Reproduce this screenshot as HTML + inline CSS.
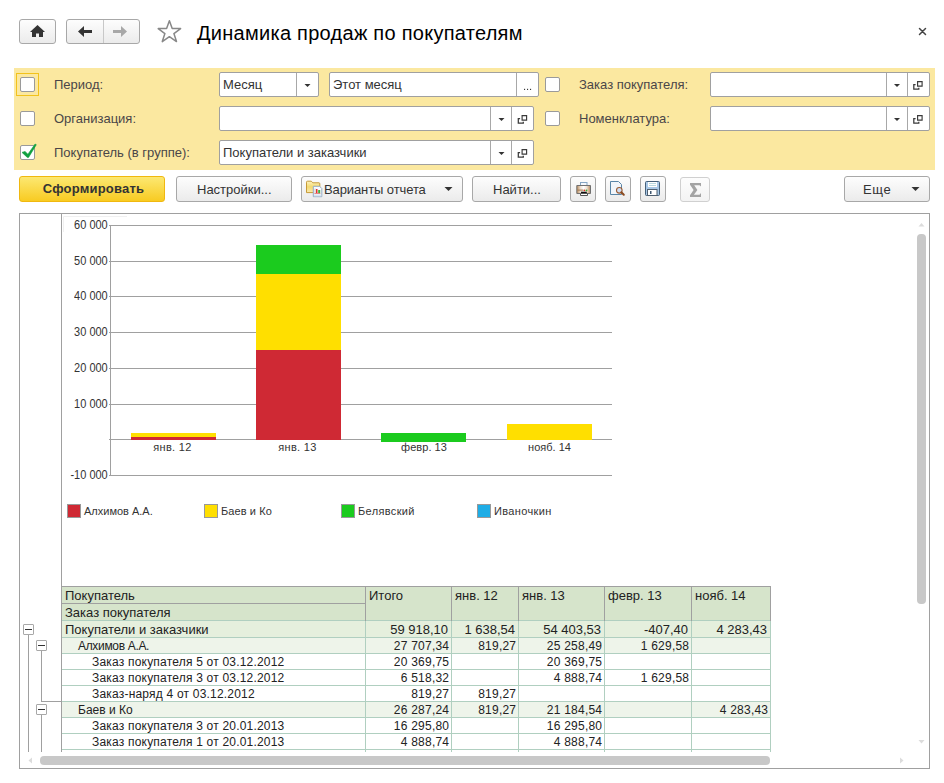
<!DOCTYPE html>
<html><head><meta charset="utf-8">
<style>
*{box-sizing:border-box;margin:0;padding:0}
html,body{width:944px;height:783px;overflow:hidden;background:#fff;font-family:"Liberation Sans",sans-serif;color:#333}
.a{position:absolute;white-space:nowrap}
.t13{font-size:13px;line-height:15px}
.btn{position:absolute;border:1px solid #a8a8a8;border-radius:3px;background:linear-gradient(#fdfdfd,#ebebeb);}
.lbl{color:#4a4648}
.fld{position:absolute;background:#fff;border:1px solid #a0a0a0;border-radius:2px;height:25px}
.fld .dv{position:absolute;top:0;bottom:0;width:1px;background:#a8a8a8}
.cb{position:absolute;width:15px;height:15px;border:1px solid #9a9a9a;border-radius:2px;background:#fff}
svg{position:absolute;overflow:visible}
</style></head><body>

<!-- title bar -->
<div class="btn" style="left:19px;top:19px;width:37px;height:25px"></div>
<div class="btn" style="left:66px;top:19px;width:74px;height:25px"></div>
<div class="a" style="left:103px;top:20px;width:1px;height:23px;background:#c8c8c8"></div>
<svg style="left:0;top:0" width="944" height="60">
  <path d="M30 32 L37.5 25 L45 32 Z" fill="#333"/>
  <path d="M32 31 H43 V37 H39 V33.5 H36 V37 H32 Z" fill="#333"/>
  <path d="M78 31.5 L84 26 V30 H92 V33 H84 V37 Z" fill="#333"/>
  <path d="M127 31.5 L121 26 V30 H113 V33 H121 V37 Z" fill="#a8a8a8"/>
  <path d="M169.4 20.8 L172.2 28.6 L180.6 28.6 L173.9 33.6 L176.5 41.6 L169.4 36.7 L162.3 41.6 L164.9 33.6 L158.2 28.6 L166.6 28.6 Z" fill="none" stroke="#888" stroke-width="1.5" stroke-linejoin="round"/>
  <path d="M919.5 28.5 L925.5 34.5 M925.5 28.5 L919.5 34.5" stroke="#444" stroke-width="1.5" stroke-linecap="round"/>
</svg>
<div class="a" style="left:197px;top:22px;font-size:20px;line-height:22px;color:#000;letter-spacing:0.27px">Динамика продаж по покупателям</div>

<!-- yellow panel -->
<div class="a" style="left:14px;top:68px;width:921px;height:102px;background:#fbe8a0"></div>
<div class="a" style="left:16px;top:73px;width:23px;height:23px;border:1px solid #f2c21b"></div>
<div class="cb" style="left:20px;top:77px"></div>
<div class="cb" style="left:20px;top:111px"></div>
<div class="cb" style="left:20px;top:145px"></div>
<svg style="left:0;top:0" width="944" height="200">
  <path d="M22 152.4 L25 151.4 L27.9 154.2 L35.1 144 L36.3 144.7 L28.6 157.4 L27.3 157.4 Z" fill="#10a040" stroke="#10a040" stroke-width="0.6" stroke-linejoin="round"/>
</svg>
<div class="cb" style="left:545px;top:77px"></div>
<div class="cb" style="left:545px;top:111px"></div>

<div class="a t13 lbl" style="left:54px;top:77px">Период:</div>
<div class="a t13 lbl" style="left:54px;top:111px">Организация:</div>
<div class="a t13 lbl" style="left:54px;top:145px">Покупатель (в группе):</div>
<div class="a t13 lbl" style="left:579px;top:77px">Заказ покупателя:</div>
<div class="a t13 lbl" style="left:579px;top:111px">Номенклатура:</div>

<div class="fld" style="left:219px;top:72px;width:100px"><div class="dv" style="left:76px"></div></div>
<div class="a t13" style="left:223px;top:77px">Месяц</div>
<div class="fld" style="left:329px;top:72px;width:210px"><div class="dv" style="left:186px"></div></div>
<div class="a t13" style="left:333px;top:77px">Этот месяц</div>
<svg style="left:0;top:0" width="944" height="100"><rect x="524" y="88.8" width="1.1" height="1.2" fill="#3a3a3a"/><rect x="527" y="88.8" width="1.1" height="1.2" fill="#3a3a3a"/><rect x="530" y="88.8" width="1.1" height="1.2" fill="#3a3a3a"/></svg>

<div class="fld" style="left:219px;top:106px;width:315px"><div class="dv" style="left:270px"></div><div class="dv" style="left:291px"></div></div>
<div class="fld" style="left:219px;top:140px;width:315px"><div class="dv" style="left:270px"></div><div class="dv" style="left:291px"></div></div>
<div class="a t13" style="left:223px;top:145px">Покупатели и заказчики</div>

<div class="fld" style="left:710px;top:72px;width:220px"><div class="dv" style="left:175px"></div><div class="dv" style="left:196px"></div></div>
<div class="fld" style="left:710px;top:106px;width:220px"><div class="dv" style="left:175px"></div><div class="dv" style="left:196px"></div></div>

<svg style="left:0;top:0" width="944" height="200">
  
  <g transform="translate(307.5 85.5)"><path d="M-3 -1.6 H3 L0 1.6 Z" fill="#333"/></g>
  <g transform="translate(501.5 119.5)"><path d="M-3 -1.6 H3 L0 1.6 Z" fill="#333"/></g><g transform="translate(517.5 119)"><path d="M4.6 -3.4 H9.1 V1.1 H4.6 Z" fill="none" stroke="#3a3a3a" stroke-width="1.15"/><path d="M2.6 -0.3 H0.8 V4.2 H5.8 V2.7" fill="none" stroke="#3a3a3a" stroke-width="1.25"/></g>
  <g transform="translate(501.5 153.5)"><path d="M-3 -1.6 H3 L0 1.6 Z" fill="#333"/></g><g transform="translate(517.5 153)"><path d="M4.6 -3.4 H9.1 V1.1 H4.6 Z" fill="none" stroke="#3a3a3a" stroke-width="1.15"/><path d="M2.6 -0.3 H0.8 V4.2 H5.8 V2.7" fill="none" stroke="#3a3a3a" stroke-width="1.25"/></g>
  <g transform="translate(897 85.5)"><path d="M-3 -1.6 H3 L0 1.6 Z" fill="#333"/></g><g transform="translate(913 85)"><path d="M4.6 -3.4 H9.1 V1.1 H4.6 Z" fill="none" stroke="#3a3a3a" stroke-width="1.15"/><path d="M2.6 -0.3 H0.8 V4.2 H5.8 V2.7" fill="none" stroke="#3a3a3a" stroke-width="1.25"/></g>
  <g transform="translate(897 119.5)"><path d="M-3 -1.6 H3 L0 1.6 Z" fill="#333"/></g><g transform="translate(913 119)"><path d="M4.6 -3.4 H9.1 V1.1 H4.6 Z" fill="none" stroke="#3a3a3a" stroke-width="1.15"/><path d="M2.6 -0.3 H0.8 V4.2 H5.8 V2.7" fill="none" stroke="#3a3a3a" stroke-width="1.25"/></g>
</svg>

<!-- buttons -->
<div class="a" style="left:19px;top:176px;width:146px;height:26px;border:1px solid #f0b810;border-radius:3px;background:linear-gradient(#fce872,#f8cb22)"></div>
<div class="a" style="left:20.5px;top:181px;width:146px;text-align:center;font-size:13px;line-height:15px;font-weight:bold;color:#333;letter-spacing:0.2px">Сформировать</div>
<div class="btn" style="left:176px;top:176px;width:116px;height:26px"></div>
<div class="a t13" style="left:197px;top:182px">Настройки...</div>
<div class="btn" style="left:301px;top:176px;width:162px;height:26px"></div>
<div class="a t13" style="left:324px;top:182px;letter-spacing:-0.1px">Варианты отчета</div>
<div class="btn" style="left:472px;top:176px;width:89px;height:26px"></div>
<div class="a t13" style="left:493px;top:182px">Найти...</div>
<div class="btn" style="left:570px;top:176px;width:26px;height:26px"></div>
<div class="btn" style="left:605px;top:176px;width:26px;height:26px"></div>
<div class="btn" style="left:640px;top:176px;width:26px;height:26px"></div>
<div class="btn" style="left:680px;top:177px;width:30px;height:25px;border-color:#d0d0d0;background:linear-gradient(#fdfdfd,#f3f3f3)"></div>
<div class="btn" style="left:844px;top:176px;width:86px;height:26px"></div>
<div class="a t13" style="left:863px;top:182px;letter-spacing:0.6px">Еще</div>
<svg style="left:0;top:0" width="944" height="220">
  <path d="M444.5 187 H452.5 L448.5 191 Z" fill="#333"/>
  <path d="M911.5 187 H919.5 L915.5 191 Z" fill="#333"/>
  <!-- sigma -->
  <path d="M690 183 H701 V186.6 L699.5 185.2 H694.2 L697.4 190 L693.9 194.8 H699.5 L701 193 V197 H690 V195.2 L693.6 190 L690 184.8 Z" fill="#a4a4a4"/>
  <!-- folder + doc -->
  <defs>
    <linearGradient id="fg" x1="0" y1="0" x2="0" y2="1"><stop offset="0" stop-color="#fdf3c0"/><stop offset="0.5" stop-color="#f3d970"/><stop offset="1" stop-color="#fbeab0"/></linearGradient>
  </defs>
  <path d="M306.5 182.2 Q306.5 181.2 307.5 181.2 H311.3 L312.8 182.8 H319 Q319.8 182.8 319.8 183.8 V192.6 H306.5 Z" fill="url(#fg)" stroke="#c69a38" stroke-width="1"/>
  <path d="M313.3 186.3 H319.6 L321.8 188.5 V196.7 H313.3 Z" fill="#f8fbff" stroke="#94abc2" stroke-width="1"/>
  <rect x="314" y="194.5" width="7.3" height="1.8" fill="#d6e4f2"/>
  <rect x="314.6" y="188.6" width="1" height="4.6" fill="#c8c8c8"/>
  <rect x="316" y="189" width="1.5" height="4.2" fill="#e8302a"/>
  <rect x="318.2" y="190" width="2" height="3.2" fill="#3bb040"/>
  <rect x="314.4" y="193.2" width="6" height="0.8" fill="#e07070"/>
  <!-- printer -->
  <linearGradient id="pg" x1="0" y1="0" x2="1" y2="0"><stop offset="0" stop-color="#b88a5c"/><stop offset="0.28" stop-color="#efe2d4"/><stop offset="0.5" stop-color="#ffffff"/><stop offset="0.72" stop-color="#efe2d4"/><stop offset="1" stop-color="#b88a5c"/></linearGradient>
  <rect x="580.5" y="182.5" width="6.5" height="5" fill="#f4f8fc" stroke="#86a6c4" stroke-width="1"/>
  <path d="M576.8 185.5 H590.5 V193.5 H576.8 Z" fill="url(#pg)" stroke="#707070" stroke-width="1"/>
  <rect x="577.3" y="189.6" width="6" height="1" fill="#a07850"/>
  <circle cx="584.4" cy="190.3" r="0.9" fill="#e83020"/>
  <circle cx="586.5" cy="190.3" r="0.9" fill="#30b030"/>
  <rect x="581" y="191.7" width="5.8" height="1.5" fill="#111"/>
  <path d="M580.5 193.5 H587.5 V195.5 H580.5 Z" fill="#fff" stroke="#555" stroke-width="1"/>
  <!-- preview -->
  <path d="M610.5 181.5 H618.5 L621.5 184.5 V194.5 H610.5 Z" fill="#f2f6fb" stroke="#5a86a8" stroke-width="1"/>
  <circle cx="619.3" cy="190.3" r="2.8" fill="#cfe0f8" stroke="#9a5a30" stroke-width="1.1"/>
  <path d="M621.3 192.3 L623.8 194.8" stroke="#8a4a20" stroke-width="2" stroke-linecap="round"/>
  <!-- floppy -->
  <rect x="645.5" y="181.5" width="14" height="14" rx="1" fill="#a9c8e6" stroke="#45607a" stroke-width="1"/>
  <rect x="648" y="182" width="9" height="5" fill="#fff"/>
  <rect x="649" y="183" width="7" height="0.8" fill="#a8d0d8"/>
  <rect x="649" y="185" width="7" height="0.8" fill="#a8d0d8"/>
  <rect x="647.5" y="189.5" width="9.5" height="6" fill="#fff" stroke="#506070" stroke-width="1"/>
  <rect x="650" y="191" width="1.5" height="3" fill="#405870"/>
</svg>

<div class="a" style="left:19px;top:213px;width:911px;height:556px;border:1px solid #a0a0a0"></div>
<svg style="left:0;top:0" width="944" height="783">
<path d="M63.5 232 V216.5 H127" fill="none" stroke="#f0f0f0" stroke-width="1"/>
<rect x="109" y="225" width="503" height="1" fill="#a0a0a0"/>
<rect x="109" y="261" width="503" height="1" fill="#a0a0a0"/>
<rect x="109" y="296" width="503" height="1" fill="#a0a0a0"/>
<rect x="109" y="332" width="503" height="1" fill="#a0a0a0"/>
<rect x="109" y="368" width="503" height="1" fill="#a0a0a0"/>
<rect x="109" y="404" width="503" height="1" fill="#a0a0a0"/>
<rect x="109" y="439" width="503" height="1" fill="#a0a0a0"/>
<rect x="109" y="475" width="503" height="1" fill="#a0a0a0"/>
<rect x="110" y="225" width="1" height="251" fill="#a0a0a0"/>
<rect x="131" y="433" width="85" height="4" fill="#ffdf00"/>
<rect x="131" y="437" width="85" height="3" fill="#cf2934"/>
<rect x="256" y="245" width="85" height="29" fill="#1bcb1e"/>
<rect x="256" y="274" width="85" height="76" fill="#ffdf00"/>
<rect x="256" y="350" width="85" height="90" fill="#cf2934"/>
<rect x="381" y="433" width="85" height="9" fill="#1bcb1e"/>
<rect x="507" y="424" width="85" height="16" fill="#ffdf00"/>
</svg>
<div class="a" style="right:836px;top:218px;font-size:12px;line-height:14px;color:#333;transform:scaleX(0.915);transform-origin:100% 50%">60 000</div>
<div class="a" style="right:836px;top:254px;font-size:12px;line-height:14px;color:#333;transform:scaleX(0.915);transform-origin:100% 50%">50 000</div>
<div class="a" style="right:836px;top:289px;font-size:12px;line-height:14px;color:#333;transform:scaleX(0.915);transform-origin:100% 50%">40 000</div>
<div class="a" style="right:836px;top:325px;font-size:12px;line-height:14px;color:#333;transform:scaleX(0.915);transform-origin:100% 50%">30 000</div>
<div class="a" style="right:836px;top:361px;font-size:12px;line-height:14px;color:#333;transform:scaleX(0.915);transform-origin:100% 50%">20 000</div>
<div class="a" style="right:836px;top:397px;font-size:12px;line-height:14px;color:#333;transform:scaleX(0.915);transform-origin:100% 50%">10 000</div>
<div class="a" style="right:836px;top:468px;font-size:12px;line-height:14px;color:#333;transform:scaleX(0.915);transform-origin:100% 50%">-10 000</div>
<div class="a" style="left:132.5px;width:80px;text-align:center;top:441px;font-size:11px;line-height:13px;color:#333;letter-spacing:0.3px">янв. 12</div>
<div class="a" style="left:257.5px;width:80px;text-align:center;top:441px;font-size:11px;line-height:13px;color:#333;letter-spacing:0.3px">янв. 13</div>
<div class="a" style="left:384px;width:80px;text-align:center;top:441px;font-size:11px;line-height:13px;color:#333;letter-spacing:0.05px">февр. 13</div>
<div class="a" style="left:509.5px;width:80px;text-align:center;top:441px;font-size:11px;line-height:13px;color:#333;letter-spacing:0px">нояб. 14</div>
<div class="a" style="left:67px;top:504px;width:14px;height:14px;background:#cf2934;border:1px solid #999"></div>
<div class="a" style="left:84px;top:505px;font-size:11px;line-height:13px;color:#333;letter-spacing:0px">Алхимов А.А.</div>
<div class="a" style="left:204px;top:504px;width:14px;height:14px;background:#ffdf00;border:1px solid #999"></div>
<div class="a" style="left:221px;top:505px;font-size:11px;line-height:13px;color:#333;letter-spacing:0.1px">Баев и Ко</div>
<div class="a" style="left:341px;top:504px;width:14px;height:14px;background:#1bcb1e;border:1px solid #999"></div>
<div class="a" style="left:358px;top:505px;font-size:11px;line-height:13px;color:#333;letter-spacing:0.35px">Белявский</div>
<div class="a" style="left:477px;top:504px;width:14px;height:14px;background:#1fade6;border:1px solid #999"></div>
<div class="a" style="left:494px;top:505px;font-size:11px;line-height:13px;color:#333;letter-spacing:0.35px">Иваночкин</div>
<div class="a" style="left:61px;top:586px;width:710px;height:35px;background:#d6e4cb"></div>
<div class="a" style="left:61px;top:621px;width:710px;height:16px;background:#e5efdd"></div>
<div class="a" style="left:61px;top:637px;width:710px;height:1px;background:#b0cfc0"></div>
<div class="a" style="left:65px;top:622px;font-size:13px;line-height:15px;color:#222;letter-spacing:0px">Покупатели и заказчики</div>
<div class="a" style="right:496px;top:622px;font-size:13px;line-height:15px;color:#222;letter-spacing:0px">59 918,10</div>
<div class="a" style="right:429px;top:622px;font-size:13px;line-height:15px;color:#222;letter-spacing:0px">1 638,54</div>
<div class="a" style="right:343px;top:622px;font-size:13px;line-height:15px;color:#222;letter-spacing:0px">54 403,53</div>
<div class="a" style="right:256px;top:622px;font-size:13px;line-height:15px;color:#222;letter-spacing:0px">-407,40</div>
<div class="a" style="right:177px;top:622px;font-size:13px;line-height:15px;color:#222;letter-spacing:0px">4 283,43</div>
<div class="a" style="left:61px;top:638px;width:710px;height:15px;background:#eef4ea"></div>
<div class="a" style="left:61px;top:653px;width:710px;height:1px;background:#b0cfc0"></div>
<div class="a" style="left:78px;top:639px;font-size:12px;line-height:15px;color:#222;letter-spacing:-0.33px">Алхимов А.А.</div>
<div class="a" style="right:494.78px;top:639px;font-size:12px;line-height:15px;color:#222;letter-spacing:0.22px">27 707,34</div>
<div class="a" style="right:427.78px;top:639px;font-size:12px;line-height:15px;color:#222;letter-spacing:0.22px">819,27</div>
<div class="a" style="right:341.78px;top:639px;font-size:12px;line-height:15px;color:#222;letter-spacing:0.22px">25 258,49</div>
<div class="a" style="right:254.77999999999997px;top:639px;font-size:12px;line-height:15px;color:#222;letter-spacing:0.22px">1 629,58</div>
<div class="a" style="left:61px;top:654px;width:710px;height:15px;background:#fff"></div>
<div class="a" style="left:61px;top:669px;width:710px;height:1px;background:#b0cfc0"></div>
<div class="a" style="left:92px;top:655px;font-size:12px;line-height:15px;color:#222;letter-spacing:0.2px">Заказ покупателя 5 от 03.12.2012</div>
<div class="a" style="right:494.78px;top:655px;font-size:12px;line-height:15px;color:#222;letter-spacing:0.22px">20 369,75</div>
<div class="a" style="right:341.78px;top:655px;font-size:12px;line-height:15px;color:#222;letter-spacing:0.22px">20 369,75</div>
<div class="a" style="left:61px;top:670px;width:710px;height:15px;background:#fff"></div>
<div class="a" style="left:61px;top:685px;width:710px;height:1px;background:#b0cfc0"></div>
<div class="a" style="left:92px;top:671px;font-size:12px;line-height:15px;color:#222;letter-spacing:0.2px">Заказ покупателя 3 от 03.12.2012</div>
<div class="a" style="right:494.78px;top:671px;font-size:12px;line-height:15px;color:#222;letter-spacing:0.22px">6 518,32</div>
<div class="a" style="right:341.78px;top:671px;font-size:12px;line-height:15px;color:#222;letter-spacing:0.22px">4 888,74</div>
<div class="a" style="right:254.77999999999997px;top:671px;font-size:12px;line-height:15px;color:#222;letter-spacing:0.22px">1 629,58</div>
<div class="a" style="left:61px;top:686px;width:710px;height:15px;background:#fff"></div>
<div class="a" style="left:61px;top:701px;width:710px;height:1px;background:#b0cfc0"></div>
<div class="a" style="left:92px;top:687px;font-size:12px;line-height:15px;color:#222;letter-spacing:0.2px">Заказ-наряд 4 от 03.12.2012</div>
<div class="a" style="right:494.78px;top:687px;font-size:12px;line-height:15px;color:#222;letter-spacing:0.22px">819,27</div>
<div class="a" style="right:427.78px;top:687px;font-size:12px;line-height:15px;color:#222;letter-spacing:0.22px">819,27</div>
<div class="a" style="left:61px;top:702px;width:710px;height:15px;background:#eef4ea"></div>
<div class="a" style="left:61px;top:717px;width:710px;height:1px;background:#b0cfc0"></div>
<div class="a" style="left:78px;top:703px;font-size:12px;line-height:15px;color:#222;letter-spacing:0px">Баев и Ко</div>
<div class="a" style="right:494.78px;top:703px;font-size:12px;line-height:15px;color:#222;letter-spacing:0.22px">26 287,24</div>
<div class="a" style="right:427.78px;top:703px;font-size:12px;line-height:15px;color:#222;letter-spacing:0.22px">819,27</div>
<div class="a" style="right:341.78px;top:703px;font-size:12px;line-height:15px;color:#222;letter-spacing:0.22px">21 184,54</div>
<div class="a" style="right:175.77999999999997px;top:703px;font-size:12px;line-height:15px;color:#222;letter-spacing:0.22px">4 283,43</div>
<div class="a" style="left:61px;top:718px;width:710px;height:15px;background:#fff"></div>
<div class="a" style="left:61px;top:733px;width:710px;height:1px;background:#b0cfc0"></div>
<div class="a" style="left:92px;top:719px;font-size:12px;line-height:15px;color:#222;letter-spacing:0.2px">Заказ покупателя 3 от 20.01.2013</div>
<div class="a" style="right:494.78px;top:719px;font-size:12px;line-height:15px;color:#222;letter-spacing:0.22px">16 295,80</div>
<div class="a" style="right:341.78px;top:719px;font-size:12px;line-height:15px;color:#222;letter-spacing:0.22px">16 295,80</div>
<div class="a" style="left:61px;top:734px;width:710px;height:15px;background:#fff"></div>
<div class="a" style="left:61px;top:749px;width:710px;height:1px;background:#b0cfc0"></div>
<div class="a" style="left:92px;top:735px;font-size:12px;line-height:15px;color:#222;letter-spacing:0.2px">Заказ покупателя 1 от 20.01.2013</div>
<div class="a" style="right:494.78px;top:735px;font-size:12px;line-height:15px;color:#222;letter-spacing:0.22px">4 888,74</div>
<div class="a" style="right:341.78px;top:735px;font-size:12px;line-height:15px;color:#222;letter-spacing:0.22px">4 888,74</div>
<div class="a" style="left:61px;top:750px;width:710px;height:2px;background:#fff"></div>
<div class="a" style="left:61px;top:620px;width:1px;height:132px;background:#b0cfc0"></div>
<div class="a" style="left:365px;top:620px;width:1px;height:132px;background:#b0cfc0"></div>
<div class="a" style="left:451px;top:620px;width:1px;height:132px;background:#b0cfc0"></div>
<div class="a" style="left:518px;top:620px;width:1px;height:132px;background:#b0cfc0"></div>
<div class="a" style="left:604px;top:620px;width:1px;height:132px;background:#b0cfc0"></div>
<div class="a" style="left:691px;top:620px;width:1px;height:132px;background:#b0cfc0"></div>
<div class="a" style="left:770px;top:620px;width:1px;height:132px;background:#b0cfc0"></div>
<div class="a" style="left:61px;top:586px;width:710px;height:1px;background:#a0a0a0"></div>
<div class="a" style="left:61px;top:603px;width:304px;height:1px;background:#a0a0a0"></div>
<div class="a" style="left:61px;top:620px;width:710px;height:1px;background:#b0cfc0"></div>
<div class="a" style="left:365px;top:586px;width:1px;height:35px;background:#a0a0a0"></div>
<div class="a" style="left:451px;top:586px;width:1px;height:35px;background:#a0a0a0"></div>
<div class="a" style="left:518px;top:586px;width:1px;height:35px;background:#a0a0a0"></div>
<div class="a" style="left:604px;top:586px;width:1px;height:35px;background:#a0a0a0"></div>
<div class="a" style="left:691px;top:586px;width:1px;height:35px;background:#a0a0a0"></div>
<div class="a" style="left:770px;top:586px;width:1px;height:35px;background:#a0a0a0"></div>
<div class="a t13" style="left:65px;top:588px;color:#222">Покупатель</div>
<div class="a t13" style="left:65px;top:605px;color:#222">Заказ покупателя</div>
<div class="a t13" style="left:369px;top:588px;color:#222">Итого</div>
<div class="a t13" style="left:455px;top:588px;color:#222">янв. 12</div>
<div class="a t13" style="left:522px;top:588px;color:#222">янв. 13</div>
<div class="a t13" style="left:608px;top:588px;color:#222">февр. 13</div>
<div class="a t13" style="left:695px;top:588px;color:#222">нояб. 14</div>
<div class="a" style="left:61px;top:214px;width:1px;height:538px;background:#a0a0a0"></div>
<div class="a" style="left:28px;top:634px;width:1px;height:118px;background:#a0a0a0"></div>
<div class="a" style="left:41px;top:650px;width:1px;height:51px;background:#a0a0a0"></div>
<div class="a" style="left:41px;top:701px;width:20px;height:1px;background:#a0a0a0"></div>
<div class="a" style="left:41px;top:714px;width:1px;height:38px;background:#a0a0a0"></div>
<div class="a" style="left:23px;top:624px;width:11px;height:11px;border:1px solid #a8a8a8;border-radius:1px;background:#fff"></div>
<div class="a" style="left:25px;top:629px;width:7px;height:1px;background:#333"></div>
<div class="a" style="left:36px;top:640px;width:11px;height:11px;border:1px solid #a8a8a8;border-radius:1px;background:#fff"></div>
<div class="a" style="left:38px;top:645px;width:7px;height:1px;background:#333"></div>
<div class="a" style="left:36px;top:704px;width:11px;height:11px;border:1px solid #a8a8a8;border-radius:1px;background:#fff"></div>
<div class="a" style="left:38px;top:709px;width:7px;height:1px;background:#333"></div>
<div class="a" style="left:917px;top:234px;width:9px;height:370px;border-radius:4px;background:#c8c8c8"></div>
<div class="a" style="left:40px;top:756px;width:730px;height:9px;border-radius:4px;background:#c8c8c8"></div>
<svg style="left:0;top:0" width="944" height="783">
<path d="M918.5 226.5 H924.5 L921.5 223 Z" fill="#dcdcdc"/>
<path d="M918.5 740 H924.5 L921.5 743.5 Z" fill="#dcdcdc"/>
<path d="M32 757.5 V763.5 L28.5 760.5 Z" fill="#dcdcdc"/>
<path d="M900 757.5 V763.5 L903.5 760.5 Z" fill="#dcdcdc"/>
</svg>
</body></html>
